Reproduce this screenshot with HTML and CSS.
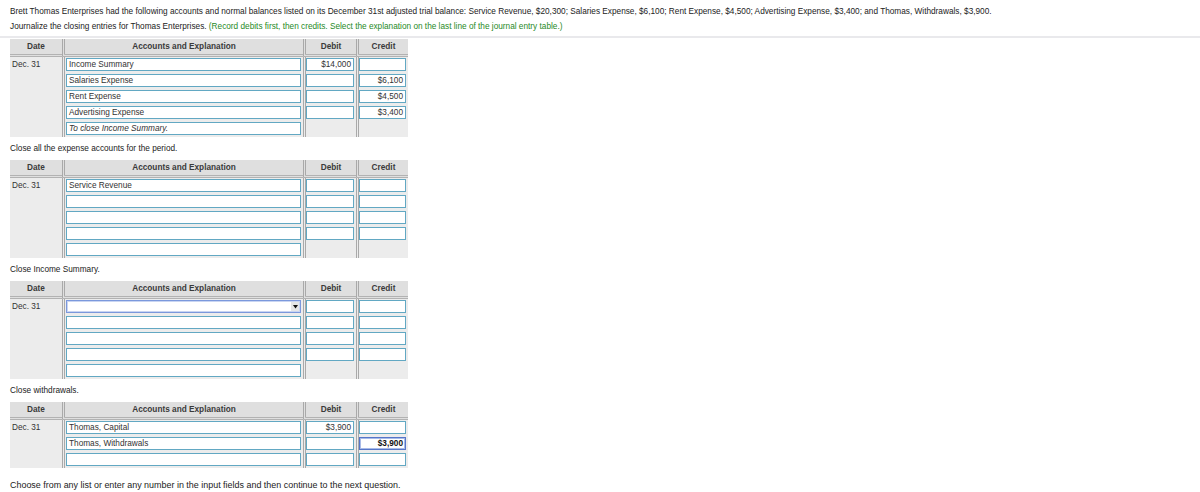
FILE: index.html
```html
<!DOCTYPE html>
<html lang="en">
<head>
<meta charset="utf-8">
<title>Closing entries</title>
<link rel="stylesheet" href="styles.css">
</head>
<body>
<div class="intro">
  <p>Brett Thomas Enterprises had the following accounts and normal balances listed on its December 31st adjusted trial balance: Service Revenue, $20,300; Salaries Expense, $6,100; Rent Expense, $4,500; Advertising Expense, $3,400; and Thomas, Withdrawals, $3,900.</p>
  <p>Journalize the closing entries for Thomas Enterprises. <span class="hint">(Record debits first, then credits. Select the explanation on the last line of the journal entry table.)</span></p>
</div>

<div class="journal">
  <div class="jh"><div>Date</div><div>Accounts and Explanation</div><div>Debit</div><div>Credit</div></div>
  <div class="jb">
    <div class="date">Dec. 31</div>
    <div class="col acc">
      <span class="fld">Income Summary</span>
      <span class="fld">Salaries Expense</span>
      <span class="fld">Rent Expense</span>
      <span class="fld">Advertising Expense</span>
      <span class="fld expl">To close Income Summary.</span>
    </div>
    <div class="col amt">
      <span class="fld num">$14,000</span>
      <span class="fld num"></span>
      <span class="fld num"></span>
      <span class="fld num"></span>
    </div>
    <div class="col amt">
      <span class="fld num"></span>
      <span class="fld num">$6,100</span>
      <span class="fld num">$4,500</span>
      <span class="fld num">$3,400</span>
    </div>
  </div>
</div>
<p class="caption">Close all the expense accounts for the period.</p>

<div class="journal">
  <div class="jh"><div>Date</div><div>Accounts and Explanation</div><div>Debit</div><div>Credit</div></div>
  <div class="jb">
    <div class="date">Dec. 31</div>
    <div class="col acc">
      <span class="fld">Service Revenue</span>
      <span class="fld"></span>
      <span class="fld"></span>
      <span class="fld"></span>
      <span class="fld"></span>
    </div>
    <div class="col amt">
      <span class="fld num"></span>
      <span class="fld num"></span>
      <span class="fld num"></span>
      <span class="fld num"></span>
    </div>
    <div class="col amt">
      <span class="fld num"></span>
      <span class="fld num"></span>
      <span class="fld num"></span>
      <span class="fld num"></span>
    </div>
  </div>
</div>
<p class="caption">Close Income Summary.</p>

<div class="journal">
  <div class="jh"><div>Date</div><div>Accounts and Explanation</div><div>Debit</div><div>Credit</div></div>
  <div class="jb">
    <div class="date">Dec. 31</div>
    <div class="col acc">
      <span class="fld select"><span class="arrow"><svg width="7" height="7" viewBox="0 0 7 7"><path d="M1 2h5L3.5 5.5z" fill="#111"/></svg></span></span>
      <span class="fld"></span>
      <span class="fld"></span>
      <span class="fld"></span>
      <span class="fld"></span>
    </div>
    <div class="col amt">
      <span class="fld num"></span>
      <span class="fld num"></span>
      <span class="fld num"></span>
      <span class="fld num"></span>
    </div>
    <div class="col amt">
      <span class="fld num"></span>
      <span class="fld num"></span>
      <span class="fld num"></span>
      <span class="fld num"></span>
    </div>
  </div>
</div>
<p class="caption">Close withdrawals.</p>

<div class="journal">
  <div class="jh"><div>Date</div><div>Accounts and Explanation</div><div>Debit</div><div>Credit</div></div>
  <div class="jb">
    <div class="date">Dec. 31</div>
    <div class="col acc">
      <span class="fld">Thomas, Capital</span>
      <span class="fld">Thomas, Withdrawals</span>
      <span class="fld"></span>
    </div>
    <div class="col amt">
      <span class="fld num">$3,900</span>
      <span class="fld num"></span>
      <span class="fld num"></span>
    </div>
    <div class="col amt">
      <span class="fld num"></span>
      <span class="fld num active">$3,900</span>
      <span class="fld num"></span>
    </div>
  </div>
</div>
<p class="footer">Choose from any list or enter any number in the input fields and then continue to the next question.</p>
</body>
</html>
```

FILE: styles.css
```css
html, body {
  margin: 0;
  padding: 0;
  background: #ffffff;
}

body {
  font-family: "Liberation Sans", Arial, sans-serif;
  font-size: 8.25px;
  color: #222222;
}

.intro {
  padding: 5px 10px 0;
  height: 31px;
  margin-bottom: 1px;
  border-bottom: 2px solid #e9e9ec;
}

.intro p {
  margin: 0 0 1px;
  line-height: 14px;
  white-space: nowrap;
}

.hint {
  color: #1f8a1f;
}

.journal {
  width: 398px;
  margin: 0 0 0 10px;
}

.jh,
.jb {
  display: grid;
  grid-template-columns: 52px 241px 53px 52px;
}

.jh > div,
.jb > div {
  background: #ececec;
}

.jh > div + div,
.jb > div + div {
  border-left: 3px double #a9a9a9;
}

.jh > div {
  background: #dfdfdf;
  height: 15px;
  line-height: 15px;
  text-align: center;
  font-weight: bold;
  color: #3a3a3a;
  border-bottom: 3px double #b2b2b2;
}

.jb > div {
  padding: 1px 0 2px;
}

.date {
  padding-left: 2px !important;
  line-height: 13px;
  color: #333333;
}

.col {
  display: flex;
  flex-direction: column;
  gap: 3px;
}

.acc {
  padding-left: 1px !important;
}

.fld {
  display: block;
  box-sizing: border-box;
  height: 13px;
  line-height: 11px;
  border: 1px solid #62a8c3;
  background: #ffffff;
  color: #333333;
  padding: 0 2px;
  white-space: nowrap;
  overflow: hidden;
}

.acc .fld {
  width: 235px;
}

.amt .fld {
  width: 48px;
}

.amt + .amt .fld {
  width: 47px;
}

.num {
  text-align: right;
}

.expl {
  font-style: italic;
}

.select {
  position: relative;
  border-color: #7b98dc;
  box-shadow: inset 0 0 0 1px #c9d5f2;
}

.arrow {
  position: absolute;
  right: 1px;
  top: 1px;
  width: 8px;
  height: 9px;
  background: #e6e6e6;
  display: flex;
  align-items: center;
  justify-content: center;
}

.arrow svg {
  display: block;
}

.active {
  font-weight: bold;
  color: #111111;
  border-color: #5676c9;
  box-shadow: inset 0 0 0 1px #a9bbe8;
}

.caption {
  margin: 0;
  padding: 5px 10px 5px;
  line-height: 13px;
  color: #222222;
}

.footer {
  margin: 0;
  padding: 11px 10px 0;
  line-height: 12px;
  font-size: 8.95px;
  color: #222222;
}
```
